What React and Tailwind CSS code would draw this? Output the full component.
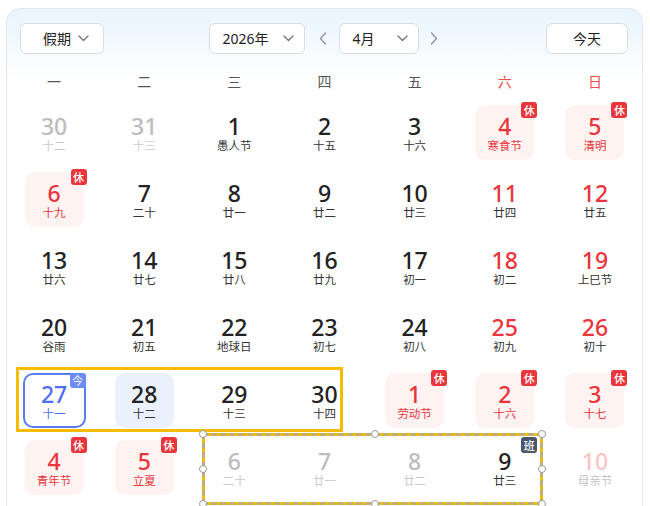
import React from 'react';

const weekdays = ['一', '二', '三', '四', '五', '六', '日'];

// kind: prev | normal | weekend | holiday | today | selected | next | work | nextWeekend
const weeks = [
  [
    { d: 30, l: '十二', kind: 'prev' },
    { d: 31, l: '十三', kind: 'prev' },
    { d: 1, l: '愚人节' },
    { d: 2, l: '十五' },
    { d: 3, l: '十六' },
    { d: 4, l: '寒食节', kind: 'holiday' },
    { d: 5, l: '清明', kind: 'holiday' },
  ],
  [
    { d: 6, l: '十九', kind: 'holiday' },
    { d: 7, l: '二十' },
    { d: 8, l: '廿一' },
    { d: 9, l: '廿二' },
    { d: 10, l: '廿三' },
    { d: 11, l: '廿四', kind: 'weekend' },
    { d: 12, l: '廿五', kind: 'weekend' },
  ],
  [
    { d: 13, l: '廿六' },
    { d: 14, l: '廿七' },
    { d: 15, l: '廿八' },
    { d: 16, l: '廿九' },
    { d: 17, l: '初一' },
    { d: 18, l: '初二', kind: 'weekend' },
    { d: 19, l: '上巳节', kind: 'weekend' },
  ],
  [
    { d: 20, l: '谷雨' },
    { d: 21, l: '初五' },
    { d: 22, l: '地球日' },
    { d: 23, l: '初七' },
    { d: 24, l: '初八' },
    { d: 25, l: '初九', kind: 'weekend' },
    { d: 26, l: '初十', kind: 'weekend' },
  ],
  [
    { d: 27, l: '十一', kind: 'today' },
    { d: 28, l: '十二', kind: 'selected' },
    { d: 29, l: '十三' },
    { d: 30, l: '十四' },
    { d: 1, l: '劳动节', kind: 'holiday' },
    { d: 2, l: '十六', kind: 'holiday' },
    { d: 3, l: '十七', kind: 'holiday' },
  ],
  [
    { d: 4, l: '青年节', kind: 'holiday' },
    { d: 5, l: '立夏', kind: 'holiday' },
    { d: 6, l: '二十', kind: 'next' },
    { d: 7, l: '廿一', kind: 'next' },
    { d: 8, l: '廿二', kind: 'next' },
    { d: 9, l: '廿三', kind: 'work' },
    { d: 10, l: '母亲节', kind: 'nextWeekend' },
  ],
];

const ChevronDown = () => (
  <svg width="11" height="7" viewBox="0 0 11 7" fill="none">
    <polyline points="1,1 5.5,5.5 10,1" stroke="#6b7280" strokeWidth="1.3" strokeLinecap="round" strokeLinejoin="round" />
  </svg>
);

const Arrow = ({ dir }) => (
  <svg width="8" height="13" viewBox="0 0 8 13" fill="none">
    <polyline
      points={dir === 'left' ? '6.5,1 1.5,6.5 6.5,12' : '1.5,1 6.5,6.5 1.5,12'}
      stroke="#8b95a7"
      strokeWidth="1.4"
      strokeLinecap="round"
      strokeLinejoin="round"
    />
  </svg>
);

const Badge = ({ text, color }) => (
  <span
    className={`absolute -top-[3px] -right-[3px] w-[16px] h-[16px] rounded-[3px] flex items-center justify-center text-[11px] leading-none font-medium text-white ${color}`}
  >
    {text}
  </span>
);

const DayCell = ({ day }) => {
  const kind = day.kind || 'normal';
  let box = 'w-[59px] h-[55px] rounded-[10px]';
  let num = 'text-[#222222]';
  let lunar = 'text-[#333333]';
  let badge = null;

  if (kind === 'prev' || kind === 'next') {
    num = 'text-[#bdbdbd]';
    lunar = 'text-[#cccccc]';
  } else if (kind === 'weekend') {
    num = 'text-[#e8363c]';
  } else if (kind === 'holiday') {
    box += ' bg-[#fff3f2]';
    num = 'text-[#e8363c]';
    lunar = 'text-[#e8363c]';
    badge = <Badge text="休" color="bg-[#e8363c]" />;
  } else if (kind === 'today') {
    box = 'w-[63px] h-[55px] rounded-[10px] border-2 border-[#5a7cf3]';
    num = 'text-[#4f6ff0]';
    lunar = 'text-[#4f6ff0]';
    badge = (
      <span className="absolute top-[-2px] right-[-2px] w-[16px] h-[15px] rounded-[3px] flex items-center justify-center text-[11px] leading-none text-white bg-[#6d8cf6]">
        今
      </span>
    );
  } else if (kind === 'selected') {
    box += ' bg-[#ebf0fd]';
  } else if (kind === 'work') {
    badge = <Badge text="班" color="bg-[#4b566b]" />;
  } else if (kind === 'nextWeekend') {
    num = 'text-[#f8c4c4]';
    lunar = 'text-[#c4c4c4]';
  }

  return (
    <div className="flex items-center justify-center">
      <div className={`relative flex flex-col items-center justify-center ${box}`}>
        <span className={`text-[23px] leading-[26px] font-medium ${num}`}>{day.d}</span>
        <span className={`text-[11.5px] leading-[14px] ${lunar}`}>{day.l}</span>
        {badge}
      </div>
    </div>
  );
};

const Handle = ({ className }) => (
  <span className={`absolute w-[8px] h-[8px] rounded-full bg-white border-[1.5px] border-[#9a9a9a] ${className}`} />
);

export default function App() {
  return (
    <div className="relative w-[650px] h-[506px] overflow-hidden bg-white font-['Noto_Sans','Noto_Sans_CJK_SC',sans-serif]">
      <div className="ml-[6px] mt-[8px] w-[637px] h-[520px] rounded-[14px] border border-[#e3e8ee] bg-gradient-to-b from-[#e8f4fd] via-white via-[14%] to-white">
        {/* Header */}
        <div className="flex items-center justify-between pl-[13px] pr-[14px] pt-[14px]">
          <button className="w-[84px] h-[31px] rounded-[6px] border border-[#d8dde4] bg-white flex items-center text-[14px] text-[#222]">
            <span className="ml-[22px]">假期</span>
            <span className="ml-auto mr-[14px] flex"><ChevronDown /></span>
          </button>

          <div className="flex items-center mr-[4px]">
            <button className="w-[96px] h-[31px] rounded-[6px] border border-[#d8dde4] bg-white flex items-center text-[14px] text-[#222]">
              <span className="ml-[13px]">2026年</span>
              <span className="ml-auto mr-[10px] flex"><ChevronDown /></span>
            </button>
            <span className="ml-[14px] mr-[12px] flex"><Arrow dir="left" /></span>
            <button className="w-[80px] h-[31px] rounded-[6px] border border-[#d8dde4] bg-white flex items-center text-[14px] text-[#222]">
              <span className="ml-[13px]">4月</span>
              <span className="ml-auto mr-[10px] flex"><ChevronDown /></span>
            </button>
            <span className="ml-[11px] flex"><Arrow dir="right" /></span>
          </div>

          <button className="w-[82px] h-[31px] rounded-[7px] border border-[#d8dde4] bg-white flex items-center justify-center text-[14px] text-[#222]">
            今天
          </button>
        </div>

        {/* Weekday header */}
        <div className="grid grid-cols-7 px-[2px] mt-[10px] h-[35px] items-center">
          {weekdays.map((w, i) => (
            <div key={w} className={`text-center text-[14px] ${i >= 5 ? 'text-[#f04a4a]' : 'text-[#555]'}`}>
              {w}
            </div>
          ))}
        </div>

        {/* Days */}
        <div className="px-[2px]">
          {weeks.map((week, r) => (
            <div key={r} className="grid grid-cols-7 h-[67px]">
              {week.map((day, c) => (
                <DayCell key={c} day={day} />
              ))}
            </div>
          ))}
        </div>
      </div>

      {/* selection overlays */}
      <div className="absolute left-[16px] top-[367px] w-[327px] h-[65px] border-[3px] border-[#f6bd00]" />
      <div className="absolute left-[202px] top-[433px] w-[341px] h-[72px] border-[3px] border-[#f6bd00]">
        <div className="absolute -inset-[3px] border-[3px] border-dashed border-[#a9a9a9]/70" />
        <Handle className="-left-[6px] -top-[6px]" />
        <Handle className="left-[166px] -top-[6px]" />
        <Handle className="-right-[6px] -top-[6px]" />
        <Handle className="-left-[6px] top-[29px]" />
        <Handle className="-right-[6px] top-[29px]" />
        <Handle className="-left-[6px] -bottom-[6px]" />
        <Handle className="left-[166px] -bottom-[6px]" />
        <Handle className="-right-[6px] -bottom-[6px]" />
      </div>
    </div>
  );
}
